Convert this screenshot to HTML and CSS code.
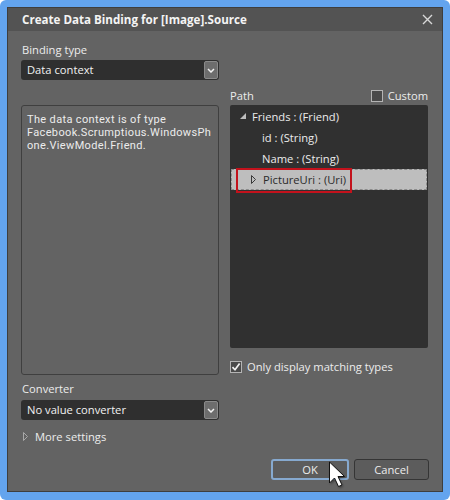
FILE: index.html
```html
<!DOCTYPE html>
<html>
<head>
<meta charset="utf-8">
<link rel="stylesheet" href="styles.css">
</head>
<body>
<div class="window">
  <div class="frame">
    <div class="titlebar">
      <span class="title">Create Data Binding for [Image].Source</span>
      <svg class="close" width="11" height="11" viewBox="0 0 11 11"><path d="M1 1 L10 10 M10 1 L1 10" stroke="#d8d8d8" stroke-width="1.4" fill="none"/></svg>
    </div>
    <div class="content">
      <div class="cols">
        <div class="col left">
          <div class="label">Binding type</div>
          <div class="combo">
            <span class="combo-text">Data context</span>
            <span class="combo-btn"><svg width="8" height="5" viewBox="0 0 8 5"><path d="M1 1 L4 4 L7 1" stroke="#f0f0f0" stroke-width="1.5" fill="none"/></svg></span>
          </div>
          <div class="desc">
            <div class="desc-line">The data context is of type</div>
            <div class="desc-line">Facebook.Scrumptious.WindowsPh</div>
            <div class="desc-line">one.ViewModel.Friend.</div>
          </div>
          <div class="label conv">Converter</div>
          <div class="combo">
            <span class="combo-text">No value converter</span>
            <span class="combo-btn"><svg width="8" height="5" viewBox="0 0 8 5"><path d="M1 1 L4 4 L7 1" stroke="#f0f0f0" stroke-width="1.5" fill="none"/></svg></span>
          </div>
          <div class="more">
            <svg class="more-tri" width="5" height="9" viewBox="0 0 5 9"><path d="M0.5 0.5 L4.5 4.5 L0.5 8.5 Z" stroke="#a8a8a8" stroke-width="1" fill="none"/></svg>
            <span>More settings</span>
          </div>
        </div>
        <div class="col right">
          <div class="path-head">
            <span>Path</span>
            <span class="check"><span class="box"></span><span>Custom</span></span>
          </div>
          <div class="tree">
            <div class="row lvl0">
              <svg class="tri" width="6" height="6" viewBox="0 0 6 6"><path d="M6 0 L6 6 L0 6 Z" fill="#bdbdbd"/></svg>
              <span>Friends : (Friend)</span>
            </div>
            <div class="row lvl1"><span>id : (String)</span></div>
            <div class="row lvl1"><span>Name : (String)</span></div>
            <div class="row lvl1b selected">
              <svg class="tri2" width="5" height="9" viewBox="0 0 5 9"><path d="M0.5 0.5 L4.5 4.5 L0.5 8.5 Z" stroke="#3a3a3a" stroke-width="1" fill="none"/></svg>
              <span>PictureUri : (Uri)</span>
            </div>
            <div class="highlight"></div>
          </div>
          <div class="check only">
            <span class="box checked"><svg width="10" height="10" viewBox="0 0 10 10"><path d="M1.5 5.2 L4 7.8 L8.6 1.6" stroke="#f2f2f2" stroke-width="1.7" fill="none"/></svg></span>
            <span>Only display matching types</span>
          </div>
        </div>
      </div>
      <div class="buttons">
        <div class="btn ok">OK</div>
        <div class="btn">Cancel</div>
      </div>
    </div>
  </div>
  <svg class="cursor" width="20" height="30" viewBox="0 0 20 30">
    <defs><filter id="sh" x="-50%" y="-50%" width="200%" height="200%"><feGaussianBlur stdDeviation="1.2"/></filter></defs>
    <path d="M2.5 2.5 L2.5 23.5 L7.5 18.5 L11.5 27 L15 25.5 L11 17 L17.5 17 Z" fill="#000" opacity="0.45" filter="url(#sh)"/>
    <path d="M1.5 1 L1.5 22 L6.5 17 L10.5 25.5 L14 24 L10 15.5 L16.5 15.5 Z" fill="#fff" stroke="#111" stroke-width="1" stroke-linejoin="round"/>
  </svg>
</div>
</body>
</html>
```

FILE: styles.css
```css
* { box-sizing: border-box; }
body {
  margin: 0;
  background: #ffffff;
  font-family: "Open Sans", "Noto Sans", sans-serif;
  font-size: 11.2px;
  color: #ececec;
}
.window {
  position: relative;
  width: 450px;
  height: 500px;
  background: #63a4ee;
  border-radius: 6px;
  padding: 7px 7px 8px 7px;
}
.frame {
  height: 100%;
  border: 1px solid #3e3e3e;
  background: #636363;
  display: flex;
  flex-direction: column;
}
.titlebar {
  height: 23px;
  background: #535353;
  display: flex;
  align-items: center;
  justify-content: space-between;
  padding: 0 9px 0 14px;
}
.title {
  font-weight: bold;
  font-size: 11.6px;
  color: #f4f4f4;
  line-height: 23px;
}
.close { display: block; }
.content {
  flex: 1;
  padding: 11px 14px 0 13px;
  display: flex;
  flex-direction: column;
}
.cols {
  display: flex;
  gap: 11px;
}
.col {
  width: 198px;
  display: flex;
  flex-direction: column;
}
.label {
  line-height: 15px;
  padding-left: 1px;
}
.label.conv { margin-top: 6px; }
.combo {
  margin-top: 3px;
  height: 20px;
  background: #2f2f2f;
  border-radius: 3px;
  display: flex;
  align-items: center;
  justify-content: space-between;
  padding: 0 1px 0 6px;
}
.label.conv + .combo { margin-top: 4px; }
.combo-text { line-height: 18px; color: #f2f2f2; }
.combo-btn {
  width: 14px;
  height: 18px;
  background: #6d6d6d;
  border: 1px solid #8a8a8a;
  border-radius: 2px;
  display: flex;
  align-items: center;
  justify-content: center;
}
.combo-btn svg { display: block; }
.desc {
  margin-top: 25px;
  height: 270px;
  border: 1px solid #3f3f3f;
  border-radius: 3px;
  padding: 8px 5px;
}
.desc-line {
  font-family: Roboto, "Open Sans", sans-serif;
  font-size: 11px;
  line-height: 12.8px;
  letter-spacing: 0.35px;
  white-space: nowrap;
}
.more {
  margin-top: 9px;
  line-height: 15px;
  display: flex;
  align-items: center;
  padding-left: 2px;
}
.more-tri { display: block; margin-right: 7px; }
.right { margin-top: 46px; }
.path-head {
  line-height: 15px;
  display: flex;
  justify-content: space-between;
  align-items: center;
}
.check {
  display: flex;
  align-items: center;
  line-height: 15px;
}
.box {
  width: 12px;
  height: 12px;
  border: 1px solid #b4b4b4;
  background: #4a4a4a;
  margin-right: 5px;
  display: flex;
  align-items: center;
  justify-content: center;
}
.box svg { display: block; }
.tree {
  position: relative;
  margin-top: 2px;
  height: 243px;
  background: #303030;
  border-radius: 2px;
  padding: 1px 1px;
}
.row {
  height: 21px;
  display: flex;
  align-items: center;
  line-height: 21px;
}
.row.lvl0 { padding-left: 9px; }
.row.lvl0 .tri { display: block; margin-right: 6px; margin-top: -2px; }
.row.lvl1 { padding-left: 31px; }
.row.lvl1b { padding-left: 19px; }
.tri2 { display: block; margin-right: 7px; }
.row.selected {
  background: #bebebe;
  color: #2b2b2b;
  border: 1px dashed #8c8c8c;
}
.highlight {
  position: absolute;
  left: 6px;
  top: 63px;
  width: 116px;
  height: 25px;
  border: 2px solid #c3121c;
}
.check.only { margin-top: 11px; }
.buttons {
  margin-top: 15px;
  display: flex;
  justify-content: flex-end;
  gap: 5px;
  margin-right: -1px;
}
.btn {
  height: 21px;
  border-radius: 3px;
  background: #5c5c5c;
  border: 1px solid #353535;
  width: 75px;
  text-align: center;
  line-height: 19px;
  color: #ececec;
}
.btn.ok {
  width: 78px;
  border: 2px solid #86a9cf;
  line-height: 17px;
}
.cursor {
  position: absolute;
  left: 328px;
  top: 461px;
}
```
